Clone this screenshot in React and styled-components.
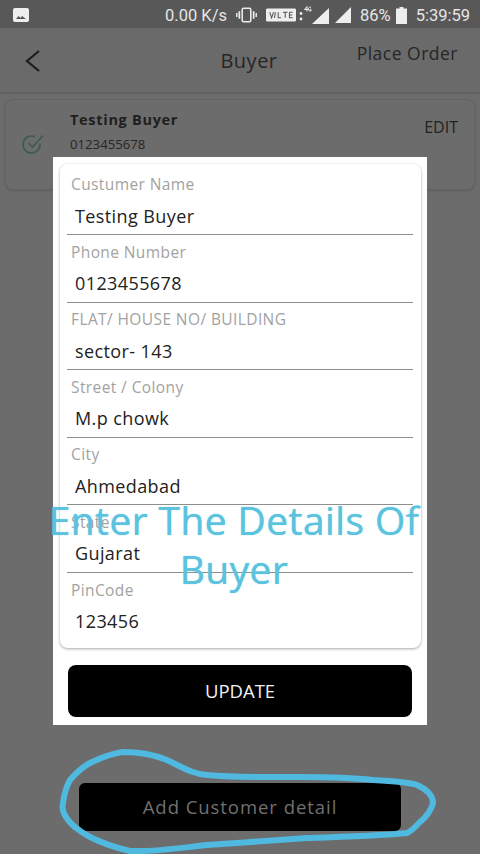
import React from "react";
import styled, { createGlobalStyle } from "styled-components";

const GlobalStyle = createGlobalStyle`
  html, body { margin: 0; padding: 0; background: #6c6c6c; }
  body { font-family: "Open Sans", "Liberation Sans", sans-serif; }
`;

const Screen = styled.div`
  position: relative;
  width: 480px;
  height: 854px;
  overflow: hidden;
  display: flex;
  flex-direction: column;
  background: #6c6c6c;
`;

const StatusBar = styled.div`
  height: 28px;
  flex: none;
  background: #585858;
  display: flex;
  align-items: center;
  padding: 2px 10px 0 13px;
  box-sizing: border-box;
  color: #e6e6e6;
  font-family: "Roboto", sans-serif;
  font-size: 16.5px;
`;

const StatusLeft = styled.div`
  flex: 1;
  display: flex;
  align-items: center;
`;

const StatusRight = styled.div`
  display: flex;
  align-items: center;
`;

const StatusText = styled.span`
  margin-left: ${(p) => p.$ml || 0}px;
  white-space: nowrap;
`;

const StatusIcon = styled.svg`
  display: block;
  flex: none;
  margin-left: ${(p) => p.$ml || 0}px;
`;

const Header = styled.div`
  height: 66px;
  flex: none;
  display: flex;
  align-items: center;
  justify-content: center;
  position: relative;
  background: #6a6a6a;
  border-bottom: 2px solid #606060;
  box-sizing: border-box;
  padding-left: 18px;
`;

const BackButton = styled.svg`
  position: absolute;
  left: 24px;
  top: 21px;
`;

const Title = styled.div`
  font-size: 20px;
  color: #262626;
  letter-spacing: 0.5px;
`;

const PlaceOrder = styled.div`
  position: absolute;
  right: 22px;
  top: 13px;
  font-size: 17.5px;
  color: #262626;
  letter-spacing: 0.5px;
`;

const BuyerCard = styled.div`
  margin: 5px 5px 0;
  height: 91px;
  flex: none;
  box-sizing: border-box;
  border: 1px solid #636363;
  border-radius: 8px;
  background: #6c6c6c;
  box-shadow: 0 1px 2px #5e5e5e;
  display: flex;
  align-items: flex-start;
  padding: 10px 16px 0 15px;
`;

const CheckIcon = styled.svg`
  margin-top: 22px;
  flex: none;
`;

const BuyerInfo = styled.div`
  flex: 1;
  margin-left: 25px;
`;

const BuyerName = styled.div`
  font-size: 14.5px;
  font-weight: 700;
  color: #1e1e1e;
  letter-spacing: 0.7px;
  line-height: 20px;
`;

const BuyerPhone = styled.div`
  font-size: 13.2px;
  color: #262626;
  margin-top: 6px;
  line-height: 17px;
`;

const EditLink = styled.div`
  font-size: 16px;
  color: #222;
  margin-top: 7px;
  line-height: 20px;
`;

const BottomArea = styled.div`
  flex: 1;
  display: flex;
  justify-content: center;
  align-items: flex-end;
  padding-bottom: 23px;
`;

const AddButton = styled.div`
  width: 322px;
  height: 48px;
  box-sizing: border-box;
  padding-bottom: 2px;
  border-radius: 6px;
  background: #000;
  color: #707070;
  font-size: 18.5px;
  letter-spacing: 0.95px;
  display: flex;
  align-items: center;
  justify-content: center;
`;

const Modal = styled.div`
  position: absolute;
  left: 53px;
  top: 157px;
  width: 374px;
  height: 568px;
  box-sizing: border-box;
  background: #fff;
  padding: 7px 6px 0 7px;
  display: flex;
  flex-direction: column;
`;

const FormCard = styled.div`
  background: #fff;
  border-radius: 8px;
  box-shadow: 0 1px 3px rgba(0, 0, 0, 0.35);
  height: 484px;
  flex: none;
  box-sizing: border-box;
  padding: 3.5px 8px 0 7px;
`;

const Field = styled.div`
  height: 67.6px;
  box-sizing: border-box;
  border-bottom: ${(p) => (p.$last ? "none" : "1px solid #8e8e8e")};
  padding-top: 5.5px;
`;

const FieldLabel = styled.div`
  font-size: 15.5px;
  line-height: 22px;
  color: #a2a2a2;
  letter-spacing: 0.4px;
  padding-left: 4px;
  white-space: nowrap;
`;

const FieldValue = styled.div`
  font-size: 18px;
  line-height: 26px;
  color: #222;
  letter-spacing: 0.4px;
  padding-left: 8px;
  margin-top: 7.5px;
`;

const UpdateButton = styled.div`
  margin: 17px 9px 0 8px;
  height: 52px;
  box-sizing: border-box;
  padding-bottom: 2px;
  border-radius: 8px;
  background: #000;
  color: #f2f2f2;
  font-size: 18.5px;
  display: flex;
  align-items: center;
  justify-content: center;
`;

const Annotation = styled.div`
  position: absolute;
  left: 40px;
  top: 495px;
  width: 388px;
  text-align: center;
  color: #5cc3df;
  font-size: 39px;
  line-height: 49px;
  letter-spacing: 0.4px;
  white-space: pre-line;
  text-shadow: 0 0 1px #5cc3df;
`;

const Scribble = styled.svg`
  position: absolute;
  left: 0;
  top: 740px;
  pointer-events: none;
`;

const fields = [
  ["Custumer Name", "Testing Buyer"],
  ["Phone Number", "0123455678"],
  ["FLAT/ HOUSE NO/ BUILDING", "sector- 143"],
  ["Street / Colony", "M.p chowk"],
  ["City", "Ahmedabad"],
  ["State", "Gujarat"],
  ["PinCode", "123456"],
];

export default function App() {
  return (
    <Screen>
      <GlobalStyle />
      <StatusBar>
        <StatusLeft>
          <StatusIcon width="16" height="14" viewBox="0 0 16 14">
            <rect width="16" height="14" rx="2" fill="#eee" />
            <path d="M3 11l2.5-3 2 2 1.5-2 2 1.5 2 1.5z" fill="#555" />
          </StatusIcon>
        </StatusLeft>
        <StatusRight>
          <StatusText>0.00 K/s</StatusText>
          <StatusIcon $ml={9} width="21" height="16" viewBox="0 0 22 16">
            <rect x="6.5" y="1" width="9" height="14" rx="1.5" fill="none" stroke="#eee" strokeWidth="1.6" />
            <path d="M3.5 4v8M18.5 4v8" stroke="#eee" strokeWidth="1.8" />
            <path d="M0.8 6v4M21.2 6v4" stroke="#eee" strokeWidth="1.5" />
          </StatusIcon>
          <StatusIcon $ml={9} width="30" height="14" viewBox="0 0 32 14">
            <rect width="32" height="14" rx="1.5" fill="#eee" />
            <path d="M4 4l2 6 2-6M10 4l-1 6M13 4v6h3M18 4h5M20.5 4v6M25 4v6h3.5M25 4h3.5M25 7h3" fill="none" stroke="#555" strokeWidth="1.1" />
          </StatusIcon>
          <StatusIcon $ml={3} width="30" height="20" viewBox="0 0 30 20">
            <circle cx="2" cy="8.5" r="1.4" fill="#eee" />
            <circle cx="2" cy="14" r="1.4" fill="#eee" />
            <path d="M30 3v16H13z" fill="#eee" />
            <path d="M8 6.5V1.5L5.5 4.5H9M12 2.2a2 2 0 1 0 0 3.8V4.3h-1.2" fill="none" stroke="#eee" strokeWidth="1" />
          </StatusIcon>
          <StatusIcon $ml={6} width="16" height="16" viewBox="0 0 16 16">
            <path d="M16 0v16H0z" fill="#eee" />
          </StatusIcon>
          <StatusText $ml={9}>86%</StatusText>
          <StatusIcon $ml={5} width="11" height="17" viewBox="0 0 11 17">
            <path d="M3.5 0h4v1.5H11V17H0V1.5h3.5z" fill="#eee" />
          </StatusIcon>
          <StatusText $ml={9}>5:39:59</StatusText>
        </StatusRight>
      </StatusBar>
      <Header>
        <BackButton width="16" height="24" viewBox="0 0 16 24">
          <path d="M15 2L3 12l12 10" fill="none" stroke="#1c1c1c" strokeWidth="2.2" />
        </BackButton>
        <Title>Buyer</Title>
        <PlaceOrder>Place Order</PlaceOrder>
      </Header>
      <BuyerCard>
        <CheckIcon width="24" height="24" viewBox="0 0 24 24">
          <path d="M19 11.5v1a8.5 8.5 0 1 1-5-7.7" fill="none" stroke="#3e5a52" strokeWidth="1.7" />
          <path d="M7.5 11l4 4L22 3.5" fill="none" stroke="#3e5a52" strokeWidth="1.7" />
        </CheckIcon>
        <BuyerInfo>
          <BuyerName>Testing Buyer</BuyerName>
          <BuyerPhone>0123455678</BuyerPhone>
        </BuyerInfo>
        <EditLink>EDIT</EditLink>
      </BuyerCard>
      <BottomArea>
        <AddButton>Add Customer detail</AddButton>
      </BottomArea>
      <Modal>
        <FormCard>
          {fields.map(([label, value], i) => (
            <Field key={label} $last={i === fields.length - 1}>
              <FieldLabel>{label}</FieldLabel>
              <FieldValue>{value}</FieldValue>
            </Field>
          ))}
        </FormCard>
        <UpdateButton>UPDATE</UpdateButton>
      </Modal>
      <Annotation>{"Enter The Details Of\nBuyer"}</Annotation>
      <Scribble width="480" height="114" viewBox="0 0 480 114">
        <path
          d="M123 12C140 12 155 15 167 20C182 27 192 34 207 35C240 38 270 37 300 37C330 37 355 38 373 40C392 41 408 42 417 45C428 50 433 56 433 63C431 71 426 77 420 82C415 87 412 91 407 93C375 96 340 97 307 98C275 100 240 103 207 105C180 108 155 112 130 111C112 107 100 102 90 97C79 91 70 84 66 77C62 71 62 67 63 63C64 55 66 47 70 40C76 33 82 27 90 23C100 18 110 14 123 12Z"
          fill="none"
          stroke="#4fb9e0"
          strokeWidth="6"
          strokeLinecap="round"
          strokeLinejoin="round"
        />
      </Scribble>
    </Screen>
  );
}
